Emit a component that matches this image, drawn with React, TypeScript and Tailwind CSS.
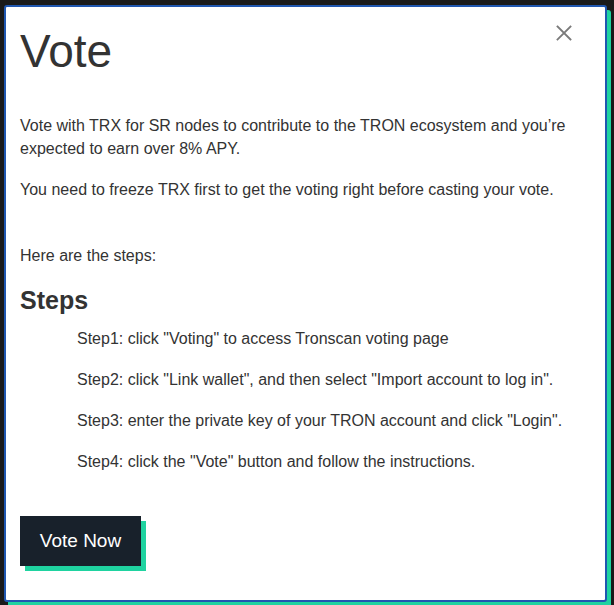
import React from 'react';

const steps = [
  'Step1: click "Voting" to access Tronscan voting page',
  'Step2: click "Link wallet", and then select "Import account to log in".',
  'Step3: enter the private key of your TRON account and click "Login".',
  'Step4: click the "Vote" button and follow the instructions.',
];

function CloseIcon() {
  return (
    <svg width="16" height="16" viewBox="0 0 16 16" fill="none" stroke="#7a7a7a" strokeWidth="1.8" strokeLinecap="square">
      <path d="M1.5 1.5 L14.5 14.5 M14.5 1.5 L1.5 14.5" />
    </svg>
  );
}

function App() {
  return (
    <div className="h-[605px] w-[614px] overflow-hidden bg-[#1a1a1a] pt-[5px] pl-[4px]" style={{ fontFamily: '"Liberation Sans", Arial, sans-serif' }}>
      <div className="relative h-[597px] w-[603px] rounded-[3px] border-2 border-[#2057b0] bg-white px-[14px] pt-[19px] text-[#333333] shadow-[4px_5px_0_0_#1fd3a0]">
        <button className="absolute right-[33px] top-[18px] p-0">
          <CloseIcon />
        </button>
        <h1 className="text-[46px] leading-[50px] font-normal">Vote</h1>
        <p className="mt-[38px] text-[16px] leading-[23px]">
          Vote with TRX for SR nodes to contribute to the TRON ecosystem and you’re expected to earn over 8% APY.
        </p>
        <p className="mt-[18px] text-[16px] leading-[23px]">
          You need to freeze TRX first to get the voting right before casting your vote.
        </p>
        <p className="mt-[43px] text-[16px] leading-[23px]">Here are the steps:</p>
        <h2 className="mt-[18px] text-[25px] leading-[30px] font-bold">Steps</h2>
        <div className="mt-[12px] flex flex-col gap-[18px] pl-[57px]">
          {steps.map((s) => (
            <p key={s} className="text-[16px] leading-[23px]">{s}</p>
          ))}
        </div>
        <button className="mt-[43px] h-[50px] w-[121px] bg-[#18212b] text-[19px] text-white shadow-[5px_5px_0_0_#1fd3a0]">
          Vote Now
        </button>
      </div>
    </div>
  );
}

export default App;
